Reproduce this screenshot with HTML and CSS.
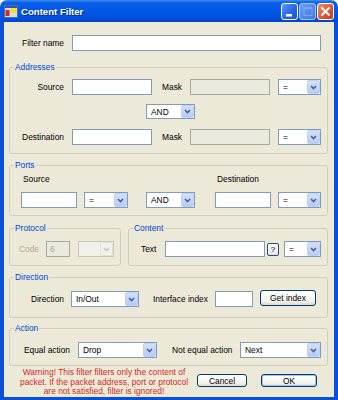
FILE: index.html
```
<!DOCTYPE html>
<html lang="en">
<head>
    <meta charset="UTF-8">
    <title>Content Filter</title>
    <link rel="stylesheet" href="styles.css">
</head>
<body>

<div class="window">
    <div class="titlebar">
        <svg class="app-icon" width="14" height="13" viewBox="0 0 14 13">
            <rect x="0.5" y="0.5" width="13" height="12" fill="#d4dbe8" stroke="#5a6a98"/>
            <rect x="1" y="1" width="12" height="2" fill="#2a56c6"/>
            <rect x="1.5" y="5" width="4" height="6" fill="#d42a1c"/>
            <rect x="7" y="3" width="5.5" height="5" fill="#f6e21a"/>
        </svg>
        <span class="title">Content Filter</span>
        <div class="caption-buttons">
            <span class="cap-btn"><svg width="15" height="15" viewBox="0 0 15 15"><rect x="4" y="10" width="6" height="2.5" fill="#fff"/></svg></span>
            <span class="cap-btn cap-off"><svg width="15" height="15" viewBox="0 0 15 15"><rect x="4" y="3.5" width="8" height="8" fill="none" stroke="#7fa4f0" stroke-width="1"/><rect x="4" y="3.5" width="8" height="1.6" fill="#7fa4f0"/></svg></span>
            <span class="cap-btn cap-close"><svg width="15" height="15" viewBox="0 0 15 15"><path d="M4 4 L11 11 M11 4 L4 11" stroke="#fff" stroke-width="2" stroke-linecap="round"/></svg></span>
        </div>
    </div>

    <div class="frame">
        <div class="client">

            <div class="row name-row">
                <span class="lbl name-lbl">Filter name</span>
                <div class="edit name-edit"></div>
            </div>

            <div class="group addresses">
                <span class="group-title">Addresses</span>
                <div class="row">
                    <span class="lbl addr-lbl">Source</span>
                    <div class="edit addr-edit"></div>
                    <span class="lbl mask-lbl">Mask</span>
                    <div class="edit mask-edit disabled"></div>
                    <div class="combo op-combo"><span>=</span><span class="arrow"><svg width="7" height="5" viewBox="0 0 7 5"><path d="M1 1 L3.5 3.5 L6 1" fill="none" stroke="#4d6185" stroke-width="1.6"/></svg></span></div>
                </div>
                <div class="row and-row">
                    <div class="combo and-combo"><span>AND</span><span class="arrow"><svg width="7" height="5" viewBox="0 0 7 5"><path d="M1 1 L3.5 3.5 L6 1" fill="none" stroke="#4d6185" stroke-width="1.6"/></svg></span></div>
                </div>
                <div class="row dest-row">
                    <span class="lbl addr-lbl">Destination</span>
                    <div class="edit addr-edit"></div>
                    <span class="lbl mask-lbl">Mask</span>
                    <div class="edit mask-edit disabled"></div>
                    <div class="combo op-combo"><span>=</span><span class="arrow"><svg width="7" height="5" viewBox="0 0 7 5"><path d="M1 1 L3.5 3.5 L6 1" fill="none" stroke="#4d6185" stroke-width="1.6"/></svg></span></div>
                </div>
            </div>

            <div class="group ports">
                <span class="group-title">Ports</span>
                <div class="ports-row">
                    <div class="port-col">
                        <span class="lbl-top">Source</span>
                        <div class="edit port-edit"></div>
                    </div>
                    <div class="combo port-op"><span>=</span><span class="arrow"><svg width="7" height="5" viewBox="0 0 7 5"><path d="M1 1 L3.5 3.5 L6 1" fill="none" stroke="#4d6185" stroke-width="1.6"/></svg></span></div>
                    <div class="combo and-combo port-and"><span>AND</span><span class="arrow"><svg width="7" height="5" viewBox="0 0 7 5"><path d="M1 1 L3.5 3.5 L6 1" fill="none" stroke="#4d6185" stroke-width="1.6"/></svg></span></div>
                    <div class="port-col port-dest">
                        <span class="lbl-top">Destination</span>
                        <div class="edit port-edit"></div>
                    </div>
                    <div class="combo op-combo port-op2"><span>=</span><span class="arrow"><svg width="7" height="5" viewBox="0 0 7 5"><path d="M1 1 L3.5 3.5 L6 1" fill="none" stroke="#4d6185" stroke-width="1.6"/></svg></span></div>
                </div>
            </div>

            <div class="pair">
                <div class="group protocol">
                    <span class="group-title">Protocol</span>
                    <div class="row">
                        <span class="lbl code-lbl">Code</span>
                        <div class="edit code-edit disabled">6</div>
                        <div class="combo code-combo disabled"><span></span><span class="arrow"><svg width="7" height="5" viewBox="0 0 7 5"><path d="M1 1 L3.5 3.5 L6 1" fill="none" stroke="#c9c7ba" stroke-width="1.6"/></svg></span></div>
                    </div>
                </div>
                <div class="group content">
                    <span class="group-title">Content</span>
                    <div class="row">
                        <span class="lbl text-lbl">Text</span>
                        <div class="edit text-edit"></div>
                        <span class="help">?</span>
                        <div class="combo text-op"><span>=</span><span class="arrow"><svg width="7" height="5" viewBox="0 0 7 5"><path d="M1 1 L3.5 3.5 L6 1" fill="none" stroke="#4d6185" stroke-width="1.6"/></svg></span></div>
                    </div>
                </div>
            </div>

            <div class="group direction">
                <span class="group-title">Direction</span>
                <div class="row">
                    <span class="lbl dir-lbl">Direction</span>
                    <div class="combo dir-combo"><span>In/Out</span><span class="arrow"><svg width="7" height="5" viewBox="0 0 7 5"><path d="M1 1 L3.5 3.5 L6 1" fill="none" stroke="#4d6185" stroke-width="1.6"/></svg></span></div>
                    <span class="lbl iface-lbl">Interface index</span>
                    <div class="edit iface-edit"></div>
                    <span class="btn get-btn">Get index</span>
                </div>
            </div>

            <div class="group action">
                <span class="group-title">Action</span>
                <div class="row">
                    <span class="lbl eq-lbl">Equal action</span>
                    <div class="combo eq-combo"><span>Drop</span><span class="arrow"><svg width="7" height="5" viewBox="0 0 7 5"><path d="M1 1 L3.5 3.5 L6 1" fill="none" stroke="#4d6185" stroke-width="1.6"/></svg></span></div>
                    <span class="lbl neq-lbl">Not equal action</span>
                    <div class="combo neq-combo"><span>Next</span><span class="arrow"><svg width="7" height="5" viewBox="0 0 7 5"><path d="M1 1 L3.5 3.5 L6 1" fill="none" stroke="#4d6185" stroke-width="1.6"/></svg></span></div>
                </div>
            </div>

            <div class="footer">
                <p class="warning">Warning! This filter filters only the content of<br>packet. If the packet address, port or protocol<br>are not satisfied, filter is ignored!</p>
                <span class="btn cancel-btn">Cancel</span>
                <span class="btn ok-btn">OK</span>
            </div>

        </div>
    </div>
</div>

</body>
</html>
```

FILE: styles.css
```
body {
    margin: 0;
    background: #ffffff;
    font-family: "Liberation Sans", Arial, sans-serif;
    font-size: 8.4px;
    color: #000;
}
.window {
    width: 338px;
    height: 400px;
}
.titlebar {
    height: 22px;
    display: flex;
    align-items: center;
    border-radius: 7px 7px 0 0;
    background: linear-gradient(#3d8cf5 0%, #0a5fe6 12%, #0058e6 45%, #0052de 80%, #0344c8 100%);
}
.app-icon {
    margin-left: 4px;
    margin-top: 1px;
}
.title {
    margin-left: 3px;
    color: #fff;
    font-weight: bold;
    font-size: 9.6px;
    text-shadow: 1px 1px 0 #0b2a8c;
}
.caption-buttons {
    margin-left: auto;
    margin-right: 4px;
    display: flex;
    gap: 1px;
}
.cap-btn {
    width: 15px;
    height: 15px;
    border: 1px solid #fff;
    border-radius: 3px;
    background: linear-gradient(135deg, #5a96f8, #2763e0 60%, #1c55d4);
    display: flex;
}
.cap-off {
    background: linear-gradient(135deg, #6da2f2, #4b86ea 60%, #3d78e2);
    border-color: #a9c6f5;
}
.cap-close {
    background: linear-gradient(135deg, #f0906c, #e0522a 60%, #c73a14);
}
.frame {
    height: 375px;
    border-style: solid;
    border-width: 0 4px 3px 4px;
    border-color: #0a4fd8;
}
.client {
    height: 375px;
    box-sizing: border-box;
    background: #ece9d8;
    padding: 13px 6px 0 5px;
}

.row {
    display: flex;
    align-items: center;
    height: 16px;
}
.lbl {
    flex: none;
    white-space: nowrap;
}
.edit {
    flex: none;
    box-sizing: border-box;
    height: 16px;
    border: 1px solid #7f9db9;
    background: #fff;
    padding-left: 3px;
    line-height: 14px;
}
.edit.disabled {
    background: #ebeadf;
    border-color: #a8a89c;
    color: #aca899;
}
.combo {
    flex: none;
    box-sizing: border-box;
    height: 16px;
    border: 1px solid #7f9db9;
    background: #fff;
    display: flex;
    align-items: center;
    justify-content: space-between;
    padding-left: 4px;
}
.arrow {
    width: 13px;
    height: 14px;
    box-sizing: border-box;
    border: 1px solid #bed0f6;
    border-radius: 2px;
    background: linear-gradient(#d2e0fd, #b6cbf8);
    display: flex;
    align-items: center;
    justify-content: center;
}
.combo.disabled {
    background: #f2f1e9;
    border-color: #c9c7ba;
}
.combo.disabled .arrow {
    background: #f2f1e9;
    border-color: #e3e1d6;
}
.btn {
    flex: none;
    box-sizing: border-box;
    display: flex;
    align-items: center;
    justify-content: center;
    border: 1px solid #003c74;
    border-radius: 3px;
    background: linear-gradient(#ffffff, #f3f2ec 75%, #dcd8cc);
}

.group {
    position: relative;
    border: 1px solid #d0d0bf;
    border-radius: 3px;
}
.group-title {
    position: absolute;
    top: -6px;
    left: 4px;
    padding: 0 1px;
    line-height: 11px;
    background: #ece9d8;
    color: #0046d5;
}

/* filter name */
.name-lbl {
    width: 55px;
    text-align: right;
}
.name-edit {
    width: 249px;
    margin-left: 8px;
}

/* addresses */
.addresses {
    margin-top: 16px;
    padding: 11px 0 8px 0;
}
.addr-lbl {
    width: 54px;
    text-align: right;
}
.addr-edit {
    width: 80px;
    margin-left: 8px;
}
.mask-lbl {
    margin-left: 10px;
    width: 21px;
}
.mask-edit {
    width: 80px;
    margin-left: 7px;
}
.op-combo {
    width: 43px;
    margin-left: 8px;
}
.and-row {
    margin-top: 9px;
    height: 15px;
}
.and-combo {
    width: 49px;
    margin-left: 136px;
    height: 15px;
}
.and-combo .arrow {
    height: 13px;
}
.dest-row {
    margin-top: 10px;
}

/* ports */
.ports {
    margin-top: 11px;
    padding: 8px 0 7px 11px;
}
.ports-row {
    display: flex;
    align-items: flex-end;
}
.port-col {
    display: flex;
    flex-direction: column;
    gap: 8px;
}
.lbl-top {
    line-height: 10px;
    padding-left: 2px;
}
.port-edit {
    width: 56px;
}
.port-op {
    width: 44px;
    margin-left: 7px;
}
.port-and {
    margin-left: 18px;
    height: 16px;
}
.port-and .arrow {
    height: 14px;
}
.port-dest {
    margin-left: 20px;
}
.port-op2 {
    margin-left: 7px;
}

/* protocol + content */
.pair {
    display: flex;
    margin-top: 12px;
}
.protocol {
    width: 112px;
    box-sizing: border-box;
    padding: 12px 0 8px 9px;
}
.code-lbl {
    width: 19px;
    color: #aca899;
}
.code-edit {
    width: 24px;
    margin-left: 8px;
}
.code-combo {
    width: 36px;
    margin-left: 8px;
}
.content {
    width: 200px;
    box-sizing: border-box;
    margin-left: 7px;
    padding: 12px 0 8px 12px;
}
.text-lbl {
    width: 16px;
}
.text-edit {
    width: 100px;
    margin-left: 8px;
}
.help {
    flex: none;
    box-sizing: border-box;
    width: 12px;
    height: 13px;
    margin-left: 2px;
    border: 1px solid #1c5180;
    border-radius: 2px;
    background: linear-gradient(#ffffff, #e6e4dc);
    display: flex;
    align-items: center;
    justify-content: center;
    font-size: 8px;
}
.text-op {
    width: 37px;
    margin-left: 5px;
}

/* direction */
.direction {
    margin-top: 11px;
    padding: 13px 0 10px 0;
}
.dir-lbl {
    width: 54px;
    text-align: right;
}
.dir-combo {
    width: 68px;
    margin-left: 7px;
}
.iface-lbl {
    margin-left: 14px;
    width: 55px;
}
.iface-edit {
    width: 38px;
    margin-left: 7px;
}
.get-btn {
    width: 56px;
    height: 16px;
    margin-left: 7px;
    margin-top: -2px;
}

/* action */
.action {
    margin-top: 10px;
    padding: 13px 0 7px 0;
}
.eq-lbl {
    width: 60px;
    text-align: right;
}
.eq-combo {
    width: 79px;
    margin-left: 8px;
}
.neq-lbl {
    margin-left: 15px;
    width: 61px;
}
.neq-combo {
    width: 81px;
    margin-left: 7px;
}

/* footer */
.footer {
    display: flex;
    align-items: flex-start;
}
.warning {
    flex: none;
    width: 184px;
    margin: 2px 0 0 3px;
    text-align: center;
    line-height: 9.5px;
    color: #d42a22;
    white-space: nowrap;
}
.cancel-btn {
    width: 50px;
    height: 13px;
    margin: 8px 0 0 1px;
}
.ok-btn {
    width: 56px;
    height: 13px;
    margin: 8px 0 0 14px;
    box-shadow: inset 0 0 0 1px #a6c0ee;
}
```
